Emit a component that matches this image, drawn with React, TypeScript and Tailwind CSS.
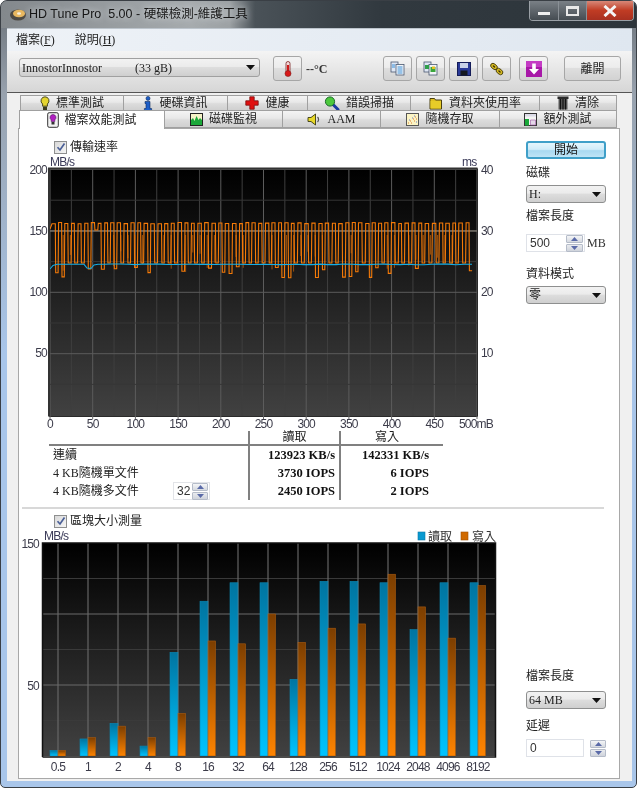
import type { ReactNode } from "react";

const uiFont = "font-['Liberation_Serif','Noto_Sans_CJK_TC',serif]";
const sansFont = "font-['Liberation_Sans','Noto_Sans_CJK_TC',sans-serif]";

const Caret = () => (
  <svg width="9" height="5" viewBox="0 0 9 5" className="shrink-0">
    <path d="M0 0h9L4.500 5z" fill="#111" />
  </svg>
);

const Select = ({ label, className = "" }: { label: string; className?: string }) => (
  <div
    className={`flex h-[18px] items-center justify-between rounded-[3px] border border-[#8e8f8f] bg-[linear-gradient(180deg,#f2f2f2_0%,#ebebeb_45%,#dddddd_50%,#cfcfcf_100%)] pl-[2px] pr-[4px] text-[12px] text-[#222] ${className}`}
  >
    <span className="whitespace-pre">{label}</span>
    <Caret />
  </div>
);

const SpinArrows = ({ className = "" }: { className?: string }) => (
  <div className={`flex flex-col gap-[1px] ${className}`}>
    <div className="flex h-[8px] items-center justify-center rounded-[1px] border border-[#b5bcc9] bg-[linear-gradient(180deg,#f4f5f7,#d5d9e0)]">
      <svg width="7" height="4" viewBox="0 0 7 4">
        <path d="M0 4h7L3.500 0z" fill="#5a6aa8" />
      </svg>
    </div>
    <div className="flex h-[8px] items-center justify-center rounded-[1px] border border-[#b5bcc9] bg-[linear-gradient(180deg,#e9ebef,#cfd3db)]">
      <svg width="7" height="4" viewBox="0 0 7 4">
        <path d="M0 0h7L3.500 4z" fill="#5a6aa8" />
      </svg>
    </div>
  </div>
);

const Check = ({ label }: { label: string }) => (
  <div className="flex h-[14px] items-center pl-[35px] text-[12px] text-[#222]">
    <div className="flex h-[13px] w-[13px] items-center justify-center border border-[#8e8f8f] bg-[linear-gradient(135deg,#d8d8d8,#f6f6f6)]">
      <svg width="10" height="10" viewBox="0 0 10 10">
        <path d="M1.500 5.200 4 8l4.500-6.500" fill="none" stroke="#4a5f97" strokeWidth="1.700" />
      </svg>
    </div>
    <span className="ml-[3px]">{label}</span>
  </div>
);

const ToolButton = ({ children, className = "" }: { children: ReactNode; className?: string }) => (
  <div
    className={`flex h-[25px] w-[29px] items-center justify-center rounded-[3px] border border-[#a6a6a6] bg-[linear-gradient(180deg,#f3f3f3_0%,#ececec_45%,#dedede_50%,#d2d2d2_100%)] ${className}`}
  >
    {children}
  </div>
);

const Thermometer = () => (
  <svg width="10" height="16" viewBox="0 0 10 16">
    <rect x="3" y="0.500" width="4" height="11" rx="2" fill="#f4d8d8" stroke="#7a2020" strokeWidth="0.800" />
    <rect x="4" y="4" width="2" height="8" fill="#d01818" />
    <circle cx="5" cy="12.500" r="3" fill="#d81818" stroke="#7a2020" strokeWidth="0.600" />
  </svg>
);

const DocsIcon = ({ green = false }: { green?: boolean }) => (
  <svg width="15" height="15" viewBox="0 0 15 15">
    <rect x="1" y="1" width="7" height="10" fill="#dfe7f4" stroke="#4a5870" strokeWidth="0.800" />
    <rect x="6" y="3.500" width="8" height="10.500" fill="#f2f4f8" stroke="#4a5870" strokeWidth="0.800" />
    {green ? (
      <>
        <rect x="2" y="4" width="4" height="4" fill="#2fa04a" />
        <rect x="7.500" y="6" width="5" height="5" fill="#3aa63c" />
        <rect x="9" y="5.500" width="3" height="2.500" fill="#e6c020" />
      </>
    ) : (
      <path d="M7.500 6h5M7.500 8h5M7.500 10h5M7.500 12h5M2 4h3M2 6h3" stroke="#3a90d8" strokeWidth="1" />
    )}
  </svg>
);

const Floppy = () => (
  <svg width="14" height="14" viewBox="0 0 14 14">
    <rect x="0.500" y="0.500" width="13" height="13" fill="#2a3a98" stroke="#141c58" />
    <rect x="3" y="1" width="8" height="5" fill="#c9d2e8" />
    <rect x="3.500" y="8.500" width="7" height="5" fill="#141820" />
  </svg>
);

// chain-like links in the toolbar
const Links = () => (
  <svg width="15" height="14" viewBox="0 0 15 14">
    <ellipse cx="5" cy="4.500" rx="3.800" ry="2.500" transform="rotate(40 5 4.500)" fill="#d8bc20" stroke="#4a4010" strokeWidth="0.900" />
    <ellipse cx="10.500" cy="9.500" rx="3.800" ry="2.500" transform="rotate(40 10.500 9.500)" fill="#d8bc20" stroke="#4a4010" strokeWidth="0.900" />
    <ellipse cx="5" cy="4.500" rx="1.500" ry="0.800" transform="rotate(40 5 4.500)" fill="#3a3008" />
    <ellipse cx="10.500" cy="9.500" rx="1.500" ry="0.800" transform="rotate(40 10.500 9.500)" fill="#3a3008" />
  </svg>
);

const DownBox = () => (
  <svg width="16" height="16" viewBox="0 0 16 16">
    <rect width="16" height="16" fill="#a818a8" />
    <rect width="16" height="6" fill="#c43cc4" />
    <path d="M6.200 2.500h3.600v5.500H13l-5 5.500L3 8h3.200z" fill="#fff" />
  </svg>
);

const Bulb = () => (
  <svg width="10" height="15" viewBox="0 0 10 15">
    <path d="M5 .8a4 4 0 0 1 2.400 7.200v2.200H2.600V8A4 4 0 0 1 5 .8z" fill="#e4d430" stroke="#3a3a10" strokeWidth="0.900" />
    <rect x="3" y="10.800" width="4" height="3.200" fill="#3a3a20" />
  </svg>
);

const InfoIcon = () => (
  <svg width="10" height="15" viewBox="0 0 10 15">
    <circle cx="5" cy="2.400" r="2" fill="#1e5fc8" stroke="#0a2a60" strokeWidth="0.600" />
    <path d="M2 5.500h5v7h1.600v2H1.400v-2H3V7.500H2z" fill="#1e5fc8" stroke="#0a2a60" strokeWidth="0.600" />
  </svg>
);

const RedCross = () => (
  <svg width="14" height="14" viewBox="0 0 14 14">
    <path d="M4.800.8h4.400v4h4v4.400h-4v4H4.800v-4h-4V4.800h4z" fill="#e01010" stroke="#7a1010" strokeWidth="0.800" />
  </svg>
);

const Magnifier = () => (
  <svg width="16" height="15" viewBox="0 0 16 15">
    <path d="M9 8.500 14 13.500" stroke="#1a3aa0" strokeWidth="3" strokeLinecap="round" />
    <circle cx="6" cy="5.500" r="4.600" fill="#4cc83c" stroke="#1a6a2a" />
  </svg>
);

const Folder = () => (
  <svg width="14" height="14" viewBox="0 0 14 14">
    <path d="M1 2.500h4.500l1 1.500H12.500v9H1z" fill="#e0c020" stroke="#4a4010" />
    <rect x="1.500" y="5" width="10.500" height="7.500" fill="#e8cc28" />
  </svg>
);

const Trash = () => (
  <svg width="12" height="14" viewBox="0 0 12 14">
    <rect x="0.500" y="0.500" width="11" height="2.500" fill="#2a2a2a" />
    <path d="M1.500 3h9v10.500h-9z" fill="#5a5a5a" />
    <path d="M3.500 3v10.500M6 3v10.500M8.500 3v10.500" stroke="#111" strokeWidth="1.200" />
  </svg>
);

const FileBulb = () => (
  <svg width="12" height="16" viewBox="0 0 12 16">
    <rect x="0.700" y="0.700" width="10.600" height="14.600" rx="1.500" fill="#f2f2f2" stroke="#333" />
    <path d="M6 2.500a3 3 0 0 1 1.800 5.400v1.600H4.200V7.900A3 3 0 0 1 6 2.500z" fill="#b020c0" stroke="#501060" strokeWidth="0.600" />
    <rect x="4.500" y="10" width="3" height="2.500" fill="#333" />
  </svg>
);

const MonitorChart = () => (
  <svg width="13" height="13" viewBox="0 0 13 13">
    <rect x="0.500" y="0.500" width="12" height="12" fill="#f6f2c8" stroke="#222" />
    <path d="M1 12V7l2-2 1.500 3 2-5 2 4 1.500-2 2 2v5z" fill="#1ca83a" />
  </svg>
);

const Speaker = () => (
  <svg width="14" height="13" viewBox="0 0 14 13">
    <path d="M1 4.500h3L8.500 1v11L4 8.500H1z" fill="#e8d828" stroke="#3a3a10" strokeWidth="0.900" />
    <path d="M10.500 4a3.500 3.500 0 0 1 0 5" fill="none" stroke="#555" strokeWidth="1.200" />
  </svg>
);

const RandomChart = () => (
  <svg width="13" height="13" viewBox="0 0 13 13">
    <rect x="0.500" y="0.500" width="12" height="12" fill="#fbf4c4" stroke="#555" />
    <path d="M2 10h1M4 8h1M5 10h1M7 6h1M8 8h1M9 4h1M10 6h1" stroke="#d87830" strokeWidth="1" />
    <path d="M3 7h1M6 5h1M8 3h1M10 9h1" stroke="#6a80d0" strokeWidth="1" />
  </svg>
);

const ExtraIcon = () => (
  <svg width="13" height="13" viewBox="0 0 13 13">
    <rect x="0.500" y="0.500" width="12" height="12" fill="#f4f4f4" stroke="#333" />
    <rect x="1" y="6" width="4" height="6.500" fill="#18a838" />
    <path d="M6.500 7h5v5h-5z" fill="#e4d8e8" stroke="#9a50a0" strokeWidth="0.600" />
    <rect x="1" y="1" width="11" height="2.500" fill="#dcdce8" />
  </svg>
);

const Tab = ({ icon, label, width }: { icon: ReactNode; label: string; width: string }) => (
  <div
    className={`flex items-center justify-center gap-[6px] border border-[#a0a0a0] border-l-0 bg-[linear-gradient(180deg,#f4f4f4_0%,#e8e8e8_45%,#dcdcdc_55%,#d0d0d0_100%)] text-[12px] text-[#222] first:border-l ${width}`}
  >
    {icon}
    <span>{label}</span>
  </div>
);

function seeded(i: number) {
  const v = Math.sin(i * 12.9898 + 4.1414) * 43758.5453;
  return v - Math.floor(v);
}

const X0 = 50;
const XEND = 470;

// bright access-time trace: a square wave, with a calm stretch near the start
function orangeTrace() {
  const pts: string[] = [`${X0},228`];
  let x = X0 + 2;
  for (let i = 0; x < XEND; i++) {
    const calm = x > 85 && x < 98;
    const top = 221.500 + seeded(i + 1) * 1.200;
    const r = seeded(i * 3 + 1);
    const bottom = calm ? 229 : r > 0.6 ? 265 + 13 * seeded(i + 40) : 262;
    const crest = 2.600 + seeded(i + 60);
    const trough = 2.200 + seeded(i + 80) * 0.800;
    pts.push(`${x.toFixed(1)},${top.toFixed(1)}`, `${(x + crest).toFixed(1)},${top.toFixed(1)}`);
    pts.push(`${(x + crest + 0.400).toFixed(1)},${bottom.toFixed(1)}`, `${(x + crest + 0.400 + trough).toFixed(1)},${bottom.toFixed(1)}`);
    x += crest + trough + 0.900;
  }
  return pts.join(" ");
}

// darker companion columns that hang below the 150 line
function darkColumns() {
  const parts: string[] = [];
  for (let x = 56, i = 0; x < XEND; x += 7.200, i++) {
    if (x > 84 && x < 99) continue;
    if (seeded(i + 7) < 0.35) continue;
    parts.push(`M${x.toFixed(1)} 234V${(250 + seeded(i + 11) * 22).toFixed(1)}`);
  }
  return parts.join("");
}

function blueTrace() {
  const pts: string[] = ["50,268", "53,264.500", "57,263.300", "84,263.300", "87,267", "91,267.500", "94,264", "98,263.300"];
  for (let x = 104; x <= 477; x += 8) pts.push(`${x},${(263 + seeded(x) * 0.7).toFixed(1)}`);
  return pts.join(" ");
}

const mbLabels = [0, 50, 100, 150, 200, 250, 300, 350, 400, 450];
const yRows = [
  { left: "200", right: "40", y: 169 },
  { left: "150", right: "30", y: 230 },
  { left: "100", right: "20", y: 291 },
  { left: "50", right: "10", y: 352 },
];

const SpeedChart = () => (
  <svg width="486" height="278" viewBox="24 154 486 278" className="block" fontFamily="'Liberation Sans',sans-serif" fontSize="12" letterSpacing="-0.800">
    <defs>
      <linearGradient id="plotA" x1="0" y1="0" x2="0" y2="1">
        <stop offset="0" stopColor="#000" />
        <stop offset="1" stopColor="#414141" />
      </linearGradient>
    </defs>
    <rect x="50" y="168" width="427" height="247" fill="url(#plotA)" />
    {Array.from({ length: 21 }, (_, i) => (
      <line key={i} x1={50 + i * 21.350} x2={50 + i * 21.350} y1="168" y2="415" stroke={i % 2 ? "#3f3f3f" : "#5c5c5c"} />
    ))}
    {Array.from({ length: 8 }, (_, i) => (
      <line key={i} x1="50" x2="477" y1={168.500 + i * 30.700} y2={168.500 + i * 30.700} stroke={i % 2 ? "#363636" : "#5c5c5c"} />
    ))}
    <line x1="50" x2="477" y1="230" y2="230" stroke="#8a8478" />
    <path d={darkColumns()} fill="none" stroke="#9a5210" strokeWidth="1" />
    <polyline points={orangeTrace()} fill="none" stroke="#f47a08" strokeWidth="1.100" />
    <polyline points={blueTrace()} fill="none" stroke="#12aee8" strokeWidth="1.100" />
    <path d="M49 415.500V167.500H477.500" fill="none" stroke="#333" strokeWidth="2" />
    <path d="M49 415.500H477.500V167.500" fill="none" stroke="#2a2a2a" />
    {Array.from({ length: 11 }, (_, i) => (
      <line key={i} x1={50 + i * 42.700} x2={50 + i * 42.700} y1="415" y2="418" stroke="#666" />
    ))}
    <text x="50" y="165" fill="#3a3a58">MB/s</text>
    <text x="462" y="165" fill="#3a3a58">ms</text>
    {yRows.map((r) => (
      <g key={r.left} fill="#3c3c4a">
        <text x="47" y={r.y + 4} textAnchor="end">{r.left}</text>
        <text x="481" y={r.y + 4}>{r.right}</text>
      </g>
    ))}
    {mbLabels.map((n, i) => (
      <text key={n} x={50 + i * 42.700} y="427" textAnchor="middle" fill="#3c3c4a">{n}</text>
    ))}
    <text x="459" y="427" fill="#3c3c4a">500mB</text>
  </svg>
);

const blocks = [
  { label: "0.5", read: 4, write: 4 },
  { label: "1", read: 12, write: 13 },
  { label: "2", read: 23, write: 21 },
  { label: "4", read: 7, write: 13 },
  { label: "8", read: 73, write: 30 },
  { label: "16", read: 109, write: 81 },
  { label: "32", read: 122, write: 79 },
  { label: "64", read: 122, write: 100 },
  { label: "128", read: 54, write: 80 },
  { label: "256", read: 123, write: 90 },
  { label: "512", read: 123, write: 93 },
  { label: "1024", read: 122, write: 128 },
  { label: "2048", read: 89, write: 105 },
  { label: "4096", read: 122, write: 83 },
  { label: "8192", read: 122, write: 120 },
];

const BlockChart = () => (
  <svg width="480" height="250" viewBox="20 526 480 250" className="block" fontFamily="'Liberation Sans',sans-serif" fontSize="12" letterSpacing="-0.800">
    <defs>
      <linearGradient id="plotB" x1="0" y1="0" x2="0" y2="1">
        <stop offset="0" stopColor="#000" />
        <stop offset="1" stopColor="#414141" />
      </linearGradient>
      <linearGradient id="barRead" x1="0" y1="0" x2="0" y2="1">
        <stop offset="0" stopColor="#0074a0" />
        <stop offset="1" stopColor="#00c4ff" />
      </linearGradient>
      <linearGradient id="barWrite" x1="0" y1="0" x2="0" y2="1">
        <stop offset="0" stopColor="#7c3e00" />
        <stop offset="1" stopColor="#ff8400" />
      </linearGradient>
    </defs>
    <rect x="43" y="542" width="452" height="213" fill="url(#plotB)" />
    {[577.500, 613, 648.500, 684, 719.500].map((y, i) => (
      <line key={y} x1="43" x2="495" y1={y} y2={y} stroke={i % 2 ? "#6a6a6a" : "#3a3a3a"} />
    ))}
    {blocks.map((b, i) => {
      const cx = 58 + i * 30;
      const rh = b.read * 1.420;
      const wh = b.write * 1.420;
      return (
        <g key={b.label}>
          <line x1={cx} x2={cx} y1="542" y2="755" stroke="#5e5e5e" />
          <rect x={cx - 8} y={755 - rh} width="8" height={rh} fill="url(#barRead)" stroke="#0a88b4" strokeWidth="0.600" />
          <rect x={cx} y={755 - wh} width="7.500" height={wh} fill="url(#barWrite)" stroke="#a85a10" strokeWidth="0.600" />
          <line x1={cx} x2={cx} y1="542" y2="755" stroke="#888" strokeOpacity="0.300" />
          <text x={cx} y="770" textAnchor="middle" fill="#3c3c4a">{b.label}</text>
        </g>
      );
    })}
    <path d="M42.500 756V542H495.500V756H42.500" fill="none" stroke="#111" strokeWidth="1.500" />
    <text x="44" y="539" fill="#3a3a58">MB/s</text>
    <text x="39" y="547" textAnchor="end" fill="#3c3c4a">150</text>
    <text x="39" y="689" textAnchor="end" fill="#3c3c4a">50</text>
    <rect x="418" y="531" width="7" height="8" fill="#0899d0" stroke="#0a78a8" strokeWidth="0.600" />
    <text x="428" y="540" fill="#333" letterSpacing="0" fontFamily="'Noto Sans CJK TC',sans-serif">讀取</text>
    <rect x="461" y="531" width="7" height="8" fill="#d06a00" stroke="#a05000" strokeWidth="0.600" />
    <text x="472" y="540" fill="#333" letterSpacing="0" fontFamily="'Noto Sans CJK TC',sans-serif">寫入</text>
  </svg>
);

const perf = [
  { name: "連續", read: "123923 KB/s", write: "142331 KB/s" },
  { name: "4 KB隨機單文件", read: "3730 IOPS", write: "6 IOPS" },
  { name: "4 KB隨機多文件", read: "2450 IOPS", write: "2 IOPS", spin: true },
];

const PerfTable = () => (
  <div className="ml-[30px] -mt-[2px] grid w-[394px] grid-cols-[199px_91px_104px] text-[12px] text-[#222]">
    <div className="box-content h-[13px] border-b-2 border-[#808080]" />
    <div className="box-content h-[13px] border-b-2 border-l-2 border-[#808080] text-center leading-[13px]">讀取</div>
    <div className="box-content h-[13px] border-b-2 border-l-2 border-[#808080] pr-[10px] text-center leading-[13px]">寫入</div>
    {perf.map((row) => (
      <div key={row.name} className="contents">
        <div className="flex h-[18px] items-center justify-between pl-[4px] pr-[38px]">
          <span>{row.name}</span>
          {row.spin && (
            <div className={`flex h-[18px] w-[37px] items-center justify-between border border-[#e2e4e8] pl-[3px] pr-[1px] text-[#333] ${sansFont}`}>
              <span>32</span>
              <SpinArrows className="w-[16px]" />
            </div>
          )}
        </div>
        <div className="flex h-[18px] items-center justify-end border-l-2 border-[#808080] pr-[4px] text-[12.500px] font-bold text-[#111]">{row.read}</div>
        <div className="flex h-[18px] items-center justify-end border-l-2 border-[#808080] pr-[14px] text-[12.500px] font-bold text-[#111]">{row.write}</div>
      </div>
    ))}
  </div>
);

const Field = ({ text, className = "" }: { text: string; className?: string }) => (
  <div className={`flex h-[18px] items-center border border-[#dfe2e8] bg-white pl-[3px] text-[12px] text-[#333] ${sansFont} ${className}`}>{text}</div>
);

const Label = ({ text, className = "" }: { text: string; className?: string }) => (
  <div className={`h-[14px] text-[12px] leading-[14px] text-[#222] ${className}`}>{text}</div>
);

const App = () => {
  return (
    <div className={`relative h-[790px] w-[640px] overflow-hidden bg-white ${uiFont} blur-[0.4px]`}>
      <div className="flex h-[788px] w-[637px] flex-col rounded-t-[7px] rounded-b-[5px] border border-[#3a3f45] bg-[linear-gradient(180deg,#6a7077_0%,#98a2ae_12%,#a9c6ea_45%,#a9c6ea_100%)]">
        {/* title bar */}
        <div className="relative flex h-[27px] shrink-0 items-center rounded-t-[6px] bg-[linear-gradient(90deg,#83888c_0%,#a6abae_30%,#9ca1a4_36%,#4a5258_40%,#31393f_60%,#2d353b_100%)] pl-[8px]">
          <svg width="18" height="16" viewBox="0 0 18 16" className="shrink-0">
            <ellipse cx="9" cy="8" rx="8" ry="5.500" fill="#4e4a44" />
            <ellipse cx="10" cy="6.500" rx="6" ry="3.800" fill="#e9b860" />
            <ellipse cx="10" cy="6.500" rx="2" ry="1.200" fill="#f8f0e0" />
          </svg>
          <span className={`ml-[2px] whitespace-pre text-[12.500px] text-[#161616] [text-shadow:0_0_6px_#e4e8ec] ${sansFont}`}>HD Tune Pro  5.00 - 硬碟檢測-維護工具</span>
          <div className="absolute right-[2px] top-0 flex h-[20px] w-[105px] overflow-hidden rounded-b-[4px] border border-t-0 border-[#9aa0a6]">
            <div className="flex w-[29px] items-center justify-center border-r border-[#8a9096] bg-[linear-gradient(180deg,#7a8086,#454c52)] pt-[6px]">
              <div className="h-[3px] w-[12px] bg-[#eee]" />
            </div>
            <div className="flex w-[28px] items-center justify-center border-r border-[#8a9096] bg-[linear-gradient(180deg,#7a8086,#454c52)]">
              <div className="h-[10px] w-[13px] border-2 border-t-[3px] border-[#e8e8e8]" />
            </div>
            <div className="flex flex-1 items-center justify-center bg-[linear-gradient(180deg,#d88878_0%,#c03c24_50%,#a83020_100%)]">
              <svg width="14" height="12" viewBox="0 0 14 12">
                <path d="M1.500 1 12.500 11M12.500 1 1.500 11" stroke="#f4f4f4" strokeWidth="3" />
              </svg>
            </div>
          </div>
        </div>

        <div className="mb-[6px] ml-[6px] flex min-h-0 w-[625px] flex-1 flex-col border-t border-[#bcc4cc] bg-[#f0f0f0]">
          {/* menu */}
          <div className="flex h-[22px] shrink-0 items-center gap-[20px] bg-[linear-gradient(90deg,#eef2f7,#dfe7f0)] pl-[9px] text-[12px] text-[#222]">
            <span>檔案(<u>F</u>)</span>
            <span>說明(<u>H</u>)</span>
          </div>

          {/* toolbar */}
          <div className="box-content flex h-[41px] shrink-0 items-start border-b border-[#555] bg-[linear-gradient(180deg,#f4f4f4,#d6d6d6)] pl-[12px]">
            <Select label="InnostorInnostor           (33 gB)" className="mt-[7px] h-[19px] w-[241px] border-[#a0a0a0] text-[11.500px]" />
            <ToolButton className="ml-[13px] mt-[5px]">
              <Thermometer />
            </ToolButton>
            <span className="ml-[4px] mt-[9px] w-[77px] text-[12px] font-bold text-[#333]">--°C</span>
            <div className="mt-[5px] flex gap-[4px]">
              <ToolButton><DocsIcon /></ToolButton>
              <ToolButton><DocsIcon green /></ToolButton>
              <ToolButton><Floppy /></ToolButton>
              <ToolButton><Links /></ToolButton>
            </div>
            <ToolButton className="ml-[8px] mt-[5px]"><DownBox /></ToolButton>
            <ToolButton className="ml-[16px] mt-[5px] w-[57px] text-[12px] text-[#222]">離開</ToolButton>
          </div>

          {/* tabs */}
          <div className="ml-[13px] mt-[2px] flex h-[16px] shrink-0">
            <Tab icon={<Bulb />} label="標準測試" width="w-[104px]" />
            <Tab icon={<InfoIcon />} label="硬碟資訊" width="w-[104px]" />
            <Tab icon={<RedCross />} label="健康" width="w-[80px]" />
            <Tab icon={<Magnifier />} label="錯誤掃描" width="w-[103px]" />
            <Tab icon={<Folder />} label="資料夾使用率" width="w-[129px]" />
            <Tab icon={<Trash />} label="清除" width="w-[77px]" />
          </div>
          <div className="relative z-10 -mt-[1px] ml-[12px] flex h-[18px] shrink-0">
            <div className="flex h-[19px] w-[146px] items-center justify-center gap-[5px] border border-b-0 border-[#a0a0a0] bg-white text-[12px] text-[#222]">
              <FileBulb />
              <span>檔案效能測試</span>
            </div>
            <Tab icon={<MonitorChart />} label="磁碟監視" width="w-[118px]" />
            <Tab icon={<Speaker />} label="AAM" width="w-[98px]" />
            <Tab icon={<RandomChart />} label="隨機存取" width="w-[119px]" />
            <Tab icon={<ExtraIcon />} label="額外測試" width="w-[117px]" />
          </div>

          {/* panel */}
          <div className="mb-[2px] ml-[11px] flex min-h-0 w-[602px] flex-1 flex-col border border-[#a8a8a8] bg-white">
            <div className="flex h-[378px] shrink-0">
              <div className="w-[507px] pt-[11px]">
                <Check label="傳輸速率" />
                <div className="ml-[5px] mt-[1px]">
                  <SpeedChart />
                </div>
                <PerfTable />
              </div>
              <div className="w-[80px] pt-[12px]">
                <div className="flex h-[18px] items-center justify-center rounded-[3px] border-2 border-[#3f9fc8] bg-[linear-gradient(180deg,#e4f5fc_0%,#d0ecf9_45%,#a9d9f1_55%,#bfe4f6_100%)] text-[12px] text-[#111]">開始</div>
                <Label text="磁碟" className="mt-[7px]" />
                <Select label="H:" className="mt-[5px]" />
                <Label text="檔案長度" className="mt-[6px]" />
                <div className="mt-[11px] flex h-[18px] items-center">
                  <div className={`flex h-[18px] w-[59px] items-center justify-between border border-[#dfe2e8] pl-[3px] pr-[1px] text-[12px] text-[#333] ${sansFont}`}>
                    <span>500</span>
                    <SpinArrows className="w-[17px]" />
                  </div>
                  <span className="ml-[2px] text-[12px] text-[#333]">MB</span>
                </div>
                <Label text="資料模式" className="mt-[15px]" />
                <Select label="零" className="mt-[5px]" />
              </div>
            </div>
            <div className="ml-[3px] h-[2px] w-[582px] shrink-0 bg-[#d8d8d8]" />
            <div className="flex min-h-0 flex-1">
              <div className="w-[507px] pt-[5px]">
                <Check label="區塊大小測量" />
                <div className="-mt-[1px] ml-[1px]">
                  <BlockChart />
                </div>
              </div>
              <div className="w-[80px] pt-[160px]">
                <Label text="檔案長度" />
                <Select label="64 MB" className="mt-[8px]" />
                <Label text="延遲" className="mt-[10px]" />
                <div className="mt-[6px] flex h-[18px] items-center justify-between">
                  <Field text="0" className="w-[58px]" />
                  <SpinArrows className="w-[16px]" />
                </div>
              </div>
            </div>
          </div>
        </div>
      </div>
    </div>
  );
};

export default App;
